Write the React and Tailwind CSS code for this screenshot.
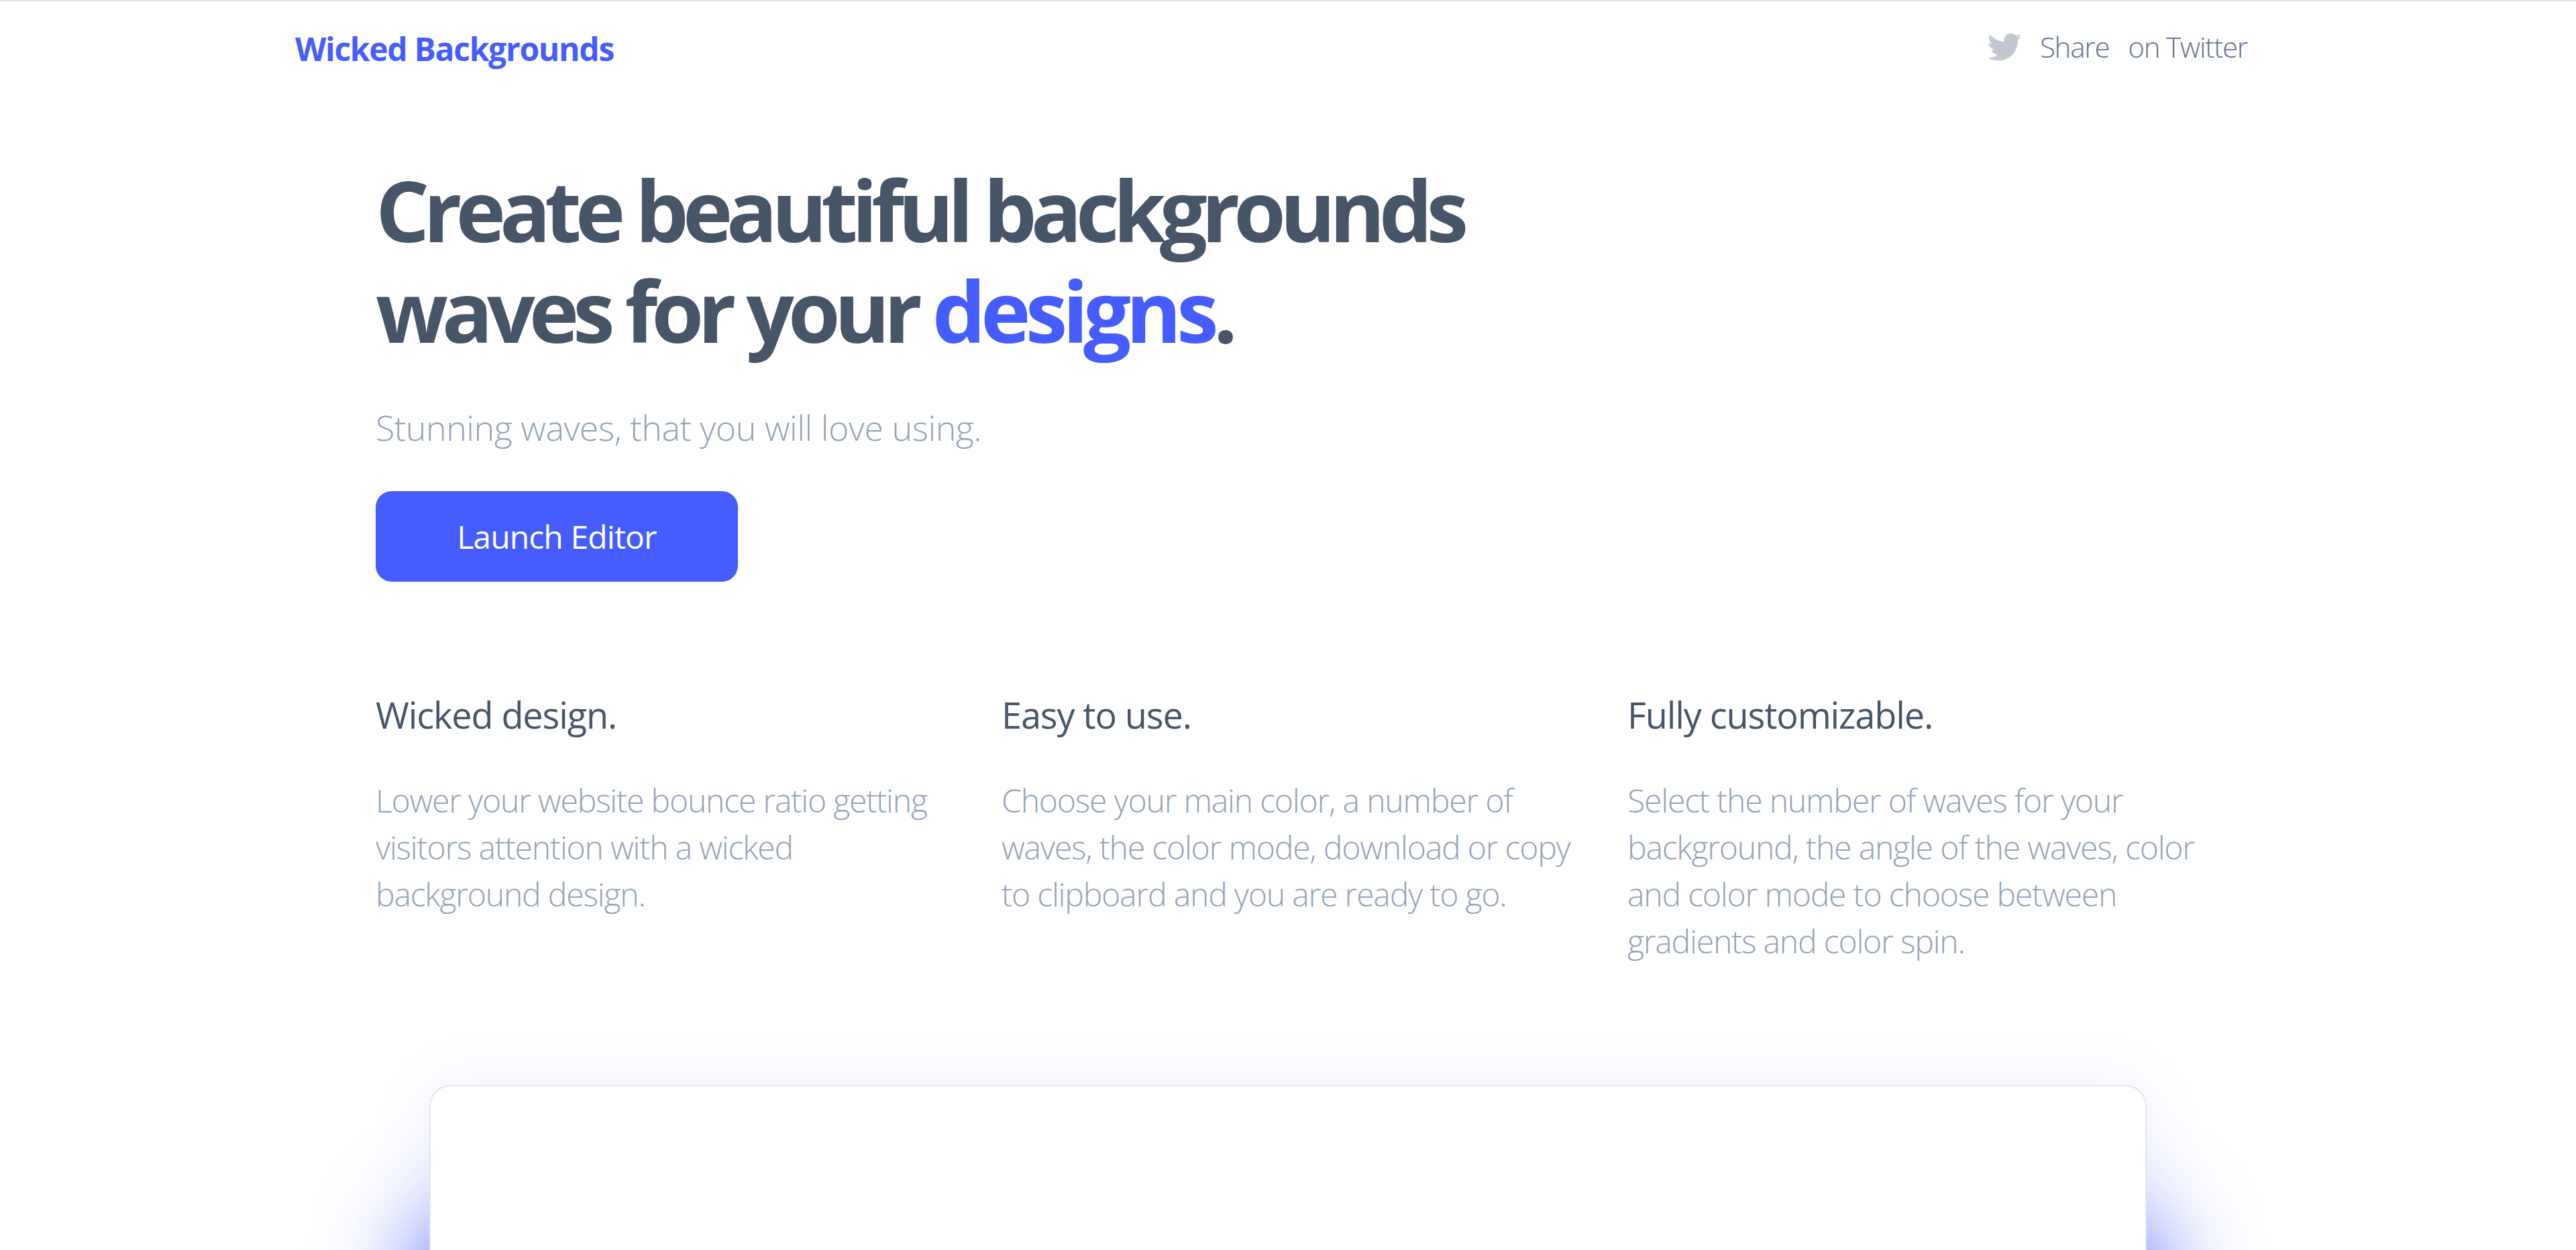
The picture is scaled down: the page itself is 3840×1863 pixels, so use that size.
import React from 'react';
import { FaTwitter } from 'react-icons/fa';

const features = [
  {
    title: 'Wicked design.',
    text: 'Lower your website bounce ratio getting visitors attention with a wicked background design.',
  },
  {
    title: 'Easy to use.',
    text: 'Choose your main color, a number of waves, the color mode, download or copy to clipboard and you are ready to go.',
  },
  {
    title: 'Fully customizable.',
    text: 'Select the number of waves for your background, the angle of the waves, color and color mode to choose between gradients and color spin.',
  },
];

const App = () => {
  return (
    <div className="h-screen overflow-hidden bg-white border-t-[2px] border-[#e0e0e0] font-['Open_Sans',sans-serif]">
      {/* Nav */}
      <nav className="flex items-center justify-between pl-[440px] pr-[490px] pt-[48px] h-[94px]">
        <a className="text-[48px] leading-[52px] font-bold tracking-[-1.3px] text-[#455cff]">Wicked Backgrounds</a>
        <div className="flex items-center text-[42px] leading-[52px] font-light text-[#64748b] tracking-[-1.2px] -translate-y-[3px]">
          <FaTwitter className="w-[50px] h-[50px] text-[#c2c7d0] mr-[28px]" />
          <span className="mr-[28px]">Share</span>
          <span>on Twitter</span>
        </div>
      </nav>

      <main className="pl-[560px] pr-[480px]">
        {/* Hero */}
        <h1 className="mt-[141px] text-[126px] leading-[150px] font-bold tracking-[-9px] text-[#475569]">
          Create beautiful backgrounds
          <br />
          waves for your <span className="text-[#455cff] tracking-[-7.5px]">designs</span>.
        </h1>
        <p className="mt-[65px] text-[52px] leading-[70px] font-light tracking-[-0.5px] text-[#94a3b8]">
          Stunning waves, that you will love using.
        </p>
        <button className="mt-[60px] w-[540px] h-[135px] rounded-[24px] bg-[#455cff] text-white text-[48px] tracking-[-0.9px]">
          Launch Editor
        </button>

        {/* Features */}
        <div className="mt-[163px] grid grid-cols-3 gap-x-[83px] w-[2716px]">
          {features.map((f) => (
            <div key={f.title}>
              <h3 className="text-[54px] leading-[70px] tracking-[-1.1px] text-[#475569]">{f.title}</h3>
              <p className="mt-[58px] text-[48px] leading-[70px] font-light tracking-[-1.15px] text-[#94a3b8]">{f.text}</p>
            </div>
          ))}
        </div>
      </main>

      {/* Preview card */}
      <div className="mt-[179px] mx-auto w-[2560px] h-[900px] rounded-[32px] bg-white border-2 border-[#e5e7eb] shadow-[0_0_100px_0_rgba(69,92,255,0.09),0_225px_150px_16px_rgba(69,92,255,0.9)]" />
    </div>
  );
};

export default App;
